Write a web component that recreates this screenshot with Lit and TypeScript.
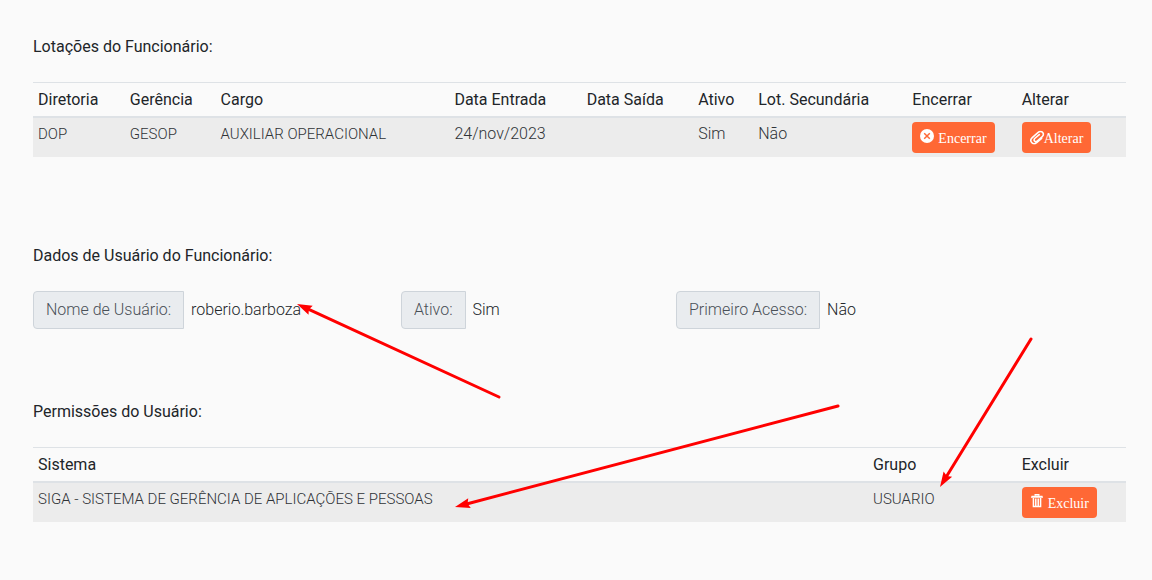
import { LitElement, html, css, svg } from "lit";
import { customElement } from "lit/decorators.js";

const closeIcon = html`<svg class="icon" viewBox="0 0 16 16" aria-hidden="true">
  <circle cx="8" cy="8" r="8" fill="#fff" />
  <path d="M4.8 4.8l6.4 6.4M11.2 4.8l-6.4 6.4" stroke="#ff6835" stroke-width="1.7" fill="none" />
</svg>`;

const clipIcon = html`<svg class="icon clip" viewBox="0 0 14 16" aria-hidden="true">
  <path
    d="M12 8.2L7.4 13.4C5.9 15.1 3.6 15.4 2.1 14.1C.6 12.8.6 10.5 2 8.8L7.2 2.7C8.7 1 11 .7 12.3 1.9C13.6 3.1 13.5 5.1 12.2 6.7L8 11.5C7 12.6 5.7 12.8 4.9 12.1C4.1 11.3 4.2 10.1 5 9.1L9 4.6"
    stroke="#fff"
    stroke-width="1.7"
    stroke-linecap="round"
    fill="none"
  />
</svg>`;

const trashIcon = html`<svg class="icon" viewBox="0 0 14 16" aria-hidden="true">
  <path
    d="M5 2V.8h4V2M2.9 4.5V14.3h8.2V4.5M5.6 5v9M8.4 5v9"
    stroke="#fff"
    stroke-width="1.7"
    fill="none"
  />
  <path d="M.8 2h12.4l.8 2.4H0z" fill="#fff" />
</svg>`;

interface Arrow {
  from: [number, number];
  to: [number, number];
}

const arrows: Arrow[] = [
  { from: [499, 397], to: [297, 304] },
  { from: [838, 406], to: [455, 507] },
  { from: [1031, 339], to: [940, 487] },
];

function drawArrow({ from, to }: Arrow) {
  const dx = to[0] - from[0];
  const dy = to[1] - from[1];
  const length = Math.hypot(dx, dy);
  const angle = (Math.atan2(dy, dx) * 180) / Math.PI;
  return svg`<g transform="translate(${from[0]} ${from[1]}) rotate(${angle})">
    <line x1="0" y1="0" x2=${length - 10} y2="0" stroke="#f00" stroke-width="3" stroke-linecap="round" />
    <path d="M${length} 0l-15 -5l2 5l-2 5z" fill="#f00" />
  </g>`;
}

@customElement("app-root")
export class AppRoot extends LitElement {
  static styles = css`
    :host {
      display: block;
      position: relative;
      box-sizing: border-box;
      min-height: 100vh;
      padding: 35px 26px 56px 33px;
      overflow: hidden;
      background: #fafafa;
      color: #212529;
      font: 300 16px/24px Roboto, "Open Sans", sans-serif;
    }
    h2 {
      margin: 0 0 23px;
      font-size: 16px;
      line-height: 24px;
      font-weight: 400;
    }
    .assignments {
      margin-bottom: 87px;
    }
    .account {
      margin-bottom: 71px;
    }
    table {
      width: 100%;
      table-layout: fixed;
      border-collapse: separate;
      border-spacing: 0;
      border-top: 1px solid #dee2e6;
    }
    th,
    td {
      box-sizing: border-box;
      padding: 4px 5px;
      text-align: left;
      vertical-align: top;
      white-space: nowrap;
    }
    th {
      padding-top: 5px;
      border-bottom: 2px solid #dee2e6;
      font-weight: 400;
    }
    td {
      background: #ececec;
      color: #2f3337;
    }
    .code {
      font-size: 15px;
    }
    button {
      display: inline-flex;
      align-items: center;
      height: 31px;
      padding: 0 8px;
      border: 0;
      border-radius: 4px;
      background: #ff6835;
      color: #fff;
      font: 14px/21px "Liberation Serif", serif;
      vertical-align: top;
    }
    button span {
      padding-top: 2px;
    }
    .spaced {
      gap: 4px;
    }
    .icon {
      width: 14px;
      height: 14px;
      margin-bottom: 3px;
    }
    .clip {
      height: 15px;
      margin-bottom: 0;
      transform: rotate(8deg);
    }
    .fields {
      display: grid;
      grid-template-columns: 368fr 275fr 450fr;
    }
    .field {
      display: flex;
      min-width: 0;
    }
    label {
      padding: 6px 12px;
      border: 1px solid #ced4da;
      border-radius: 4px 0 0 4px;
      background: #e9ecef;
      color: #495057;
      white-space: nowrap;
    }
    input {
      flex: 1;
      min-width: 0;
      padding: 0 7px;
      border: 0;
      background: none;
      color: inherit;
      font: inherit;
    }
    .marks {
      position: absolute;
      top: 0;
      left: 0;
      width: 1152px;
      height: 580px;
      pointer-events: none;
    }
    .c-board { width: 8.4%; }
    .c-office { width: 8.3%; }
    .c-role { width: 21.4%; }
    .c-start { width: 12.1%; }
    .c-end { width: 10.2%; }
    .c-active { width: 5.5%; }
    .c-second { width: 14.1%; }
    .c-action { width: 10%; }
    .c-system { width: 76.4%; }
    .c-group { width: 13.6%; }
  `;

  render() {
    return html`
      <section class="assignments">
        <h2>Lotações do Funcionário:</h2>
        <table>
          <thead>
            <tr>
              <th class="c-board">Diretoria</th>
              <th class="c-office">Gerência</th>
              <th class="c-role">Cargo</th>
              <th class="c-start">Data Entrada</th>
              <th class="c-end">Data Saída</th>
              <th class="c-active">Ativo</th>
              <th class="c-second">Lot. Secundária</th>
              <th class="c-action">Encerrar</th>
              <th class="c-action">Alterar</th>
            </tr>
          </thead>
          <tbody>
            <tr>
              <td class="code">DOP</td>
              <td class="code">GESOP</td>
              <td class="code">AUXILIAR OPERACIONAL</td>
              <td>24/nov/2023</td>
              <td></td>
              <td>Sim</td>
              <td>Não</td>
              <td><button class="spaced" type="button">${closeIcon}<span>Encerrar</span></button></td>
              <td><button type="button">${clipIcon}<span>Alterar</span></button></td>
            </tr>
          </tbody>
        </table>
      </section>

      <section class="account">
        <h2>Dados de Usuário do Funcionário:</h2>
        <div class="fields">
          <div class="field">
            <label for="username">Nome de Usuário:</label>
            <input id="username" readonly value="roberio.barboza" />
          </div>
          <div class="field">
            <label for="active">Ativo:</label>
            <input id="active" readonly value="Sim" />
          </div>
          <div class="field">
            <label for="first-access">Primeiro Acesso:</label>
            <input id="first-access" readonly value="Não" />
          </div>
        </div>
      </section>

      <section>
        <h2>Permissões do Usuário:</h2>
        <table>
          <thead>
            <tr>
              <th class="c-system">Sistema</th>
              <th class="c-group">Grupo</th>
              <th class="c-action">Excluir</th>
            </tr>
          </thead>
          <tbody>
            <tr>
              <td class="code">SIGA - SISTEMA DE GERÊNCIA DE APLICAÇÕES E PESSOAS</td>
              <td class="code">USUARIO</td>
              <td><button class="spaced" type="button">${trashIcon}<span>Excluir</span></button></td>
            </tr>
          </tbody>
        </table>
      </section>

      <svg class="marks" viewBox="0 0 1152 580" aria-hidden="true">${arrows.map(drawArrow)}</svg>
    `;
  }
}
